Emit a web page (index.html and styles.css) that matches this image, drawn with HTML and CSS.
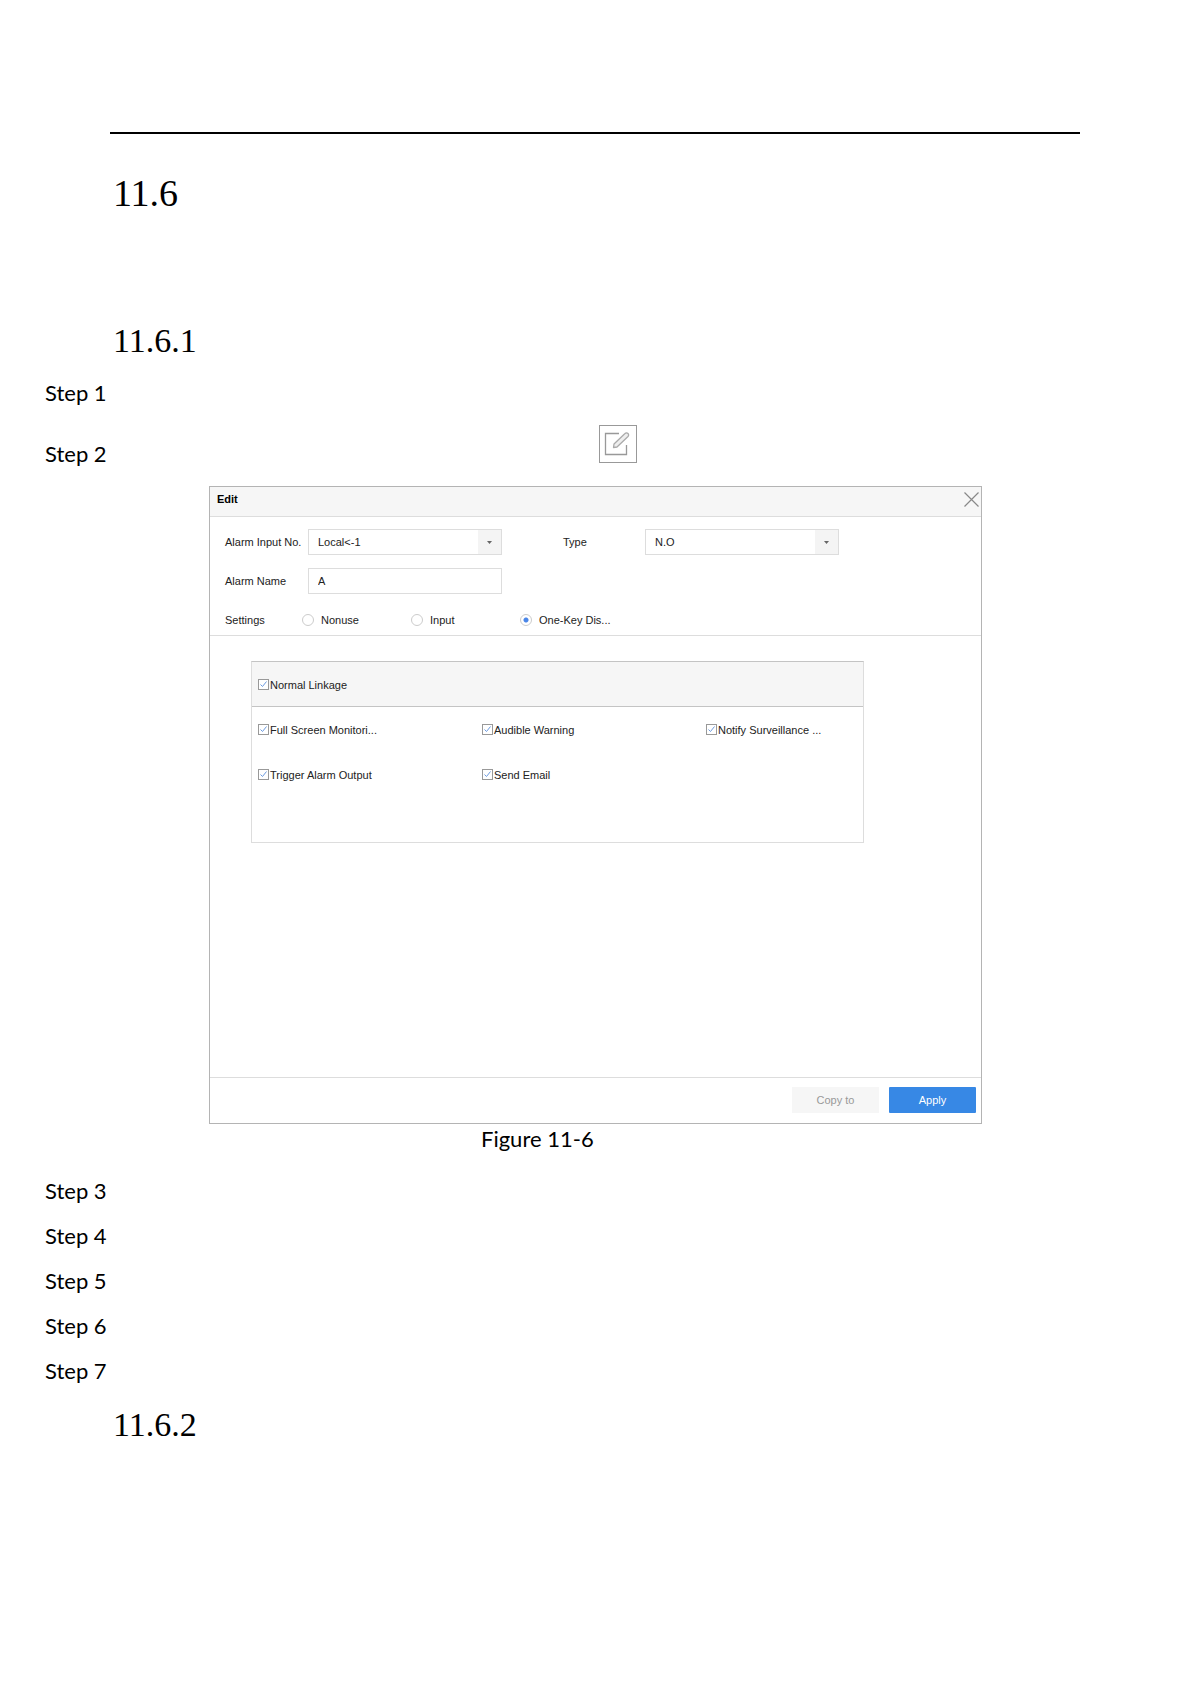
FILE: index.html
```html
<!DOCTYPE html>
<html lang="en">
<head>
  <meta charset="UTF-8" />
  <meta name="viewport" content="width=device-width, initial-scale=1.0" />
  <title>11.6</title>
  <link rel="stylesheet" href="styles.css">
</head>
<body>
  <main class="page">
    <section class="section">
      <h1>11.6</h1>
      <h2>11.6.1</h2>
    </section>

    <div class="step">Step 1</div>
    <div class="step step-edit">
      <span class="step-label">Step 2</span>
      <button class="edit-button" type="button" aria-label="Edit">
        <svg width="36" height="36" viewBox="0 0 36 36" fill="none">
          <path d="M19 7.5H5.500V28.500H26.500V19" stroke="#999" stroke-width="1.300" />
          <path d="M14 18L25 7.500A2 2 0 0 1 28 10.500L17 21L13.500 21.500Z" stroke="#aaa" stroke-width="1.300" fill="#eee" stroke-linejoin="round" />
        </svg>
      </button>
    </div>

    <figure>
      <form class="dialog">
        <div class="dialog-header">
          <span>Edit</span>
          <button class="close-button" type="button" aria-label="Close">
            <svg width="15" height="15" viewBox="0 0 15 15">
              <path d="M0.500 0.500L14.500 14.500M14.500 0.500L0.500 14.500" stroke="#888" stroke-width="1.200" />
            </svg>
          </button>
        </div>

        <div class="fields">
          <label for="alarm-input">Alarm Input No.</label>
          <select id="alarm-input">
            <option>Local&lt;-1</option>
          </select>
          <label class="type-label" for="type">Type</label>
          <select id="type">
            <option>N.O</option>
          </select>
          <label for="alarm-name">Alarm Name</label>
          <input class="text-input" type="text" id="alarm-name" value="A" />
        </div>

        <div class="settings" role="radiogroup" aria-labelledby="settings-label">
          <span id="settings-label">Settings</span>
          <label><input type="radio" name="settings" />Nonuse</label>
          <label><input type="radio" name="settings" />Input</label>
          <label><input type="radio" name="settings" checked />One-Key Dis...</label>
        </div>

        <div class="dialog-body">
          <div class="linkage">
            <div class="linkage-header">
              <label><input type="checkbox" checked />Normal Linkage</label>
            </div>
            <div class="linkage-list">
              <label><input type="checkbox" checked />Full Screen Monitori...</label>
              <label><input type="checkbox" checked />Audible Warning</label>
              <label><input type="checkbox" checked />Notify Surveillance ...</label>
              <label><input type="checkbox" checked />Trigger Alarm Output</label>
              <label><input type="checkbox" checked />Send Email</label>
            </div>
          </div>
        </div>

        <div class="dialog-footer">
          <button class="copy" type="button">Copy to</button>
          <button class="apply" type="button">Apply</button>
        </div>
      </form>
      <figcaption>Figure 11-6</figcaption>
    </figure>

    <div class="step">Step 3</div>
    <div class="step">Step 4</div>
    <div class="step">Step 5</div>
    <div class="step">Step 6</div>
    <div class="step">Step 7</div>

    <section class="last-section">
      <h2>11.6.2</h2>
    </section>
  </main>
</body>
</html>
```
FILE: styles.css
```css
* {
  box-sizing: border-box;
}
body {
  margin: 0;
  background: white;
  color: black;
  font-family: Lato, Carlito, sans-serif;
  font-size: 22px;
}
.page {
  padding: 132px 45px 200px;
}
.section {
  margin: 0 66px 0 65px;
  border-top: 2px solid black;
  padding-top: 35px;
}
.last-section {
  margin-left: 65px;
}
h1, h2 {
  margin: 0;
  padding-left: 3px;
  font-family: "Liberation Serif", serif;
  font-weight: normal;
}
h1 {
  font-size: 38px;
  line-height: 48px;
  margin-bottom: 100px;
}
h2 {
  font-size: 34px;
  line-height: 48px;
}
.step {
  line-height: 29px;
  margin-bottom: 16px;
}
.section + .step {
  margin-top: 13px;
}

/* step with the edit icon */
.step-edit {
  display: flex;
  align-items: flex-end;
  margin-top: 18px;
  margin-bottom: 23px;
}
.step-label {
  flex: 0 0 554px;
  height: 24px;
}
.edit-button {
  width: 38px;
  height: 38px;
  padding: 0;
  border: 1px solid #999;
  background: white;
}
svg {
  display: block;
}
figure {
  margin: 0 0 22px;
}
figcaption {
  max-width: 773px;
  margin: 0 auto;
  padding-left: 272px;
  line-height: 30px;
}

/* dialog */
.dialog {
  display: flex;
  flex-direction: column;
  max-width: 773px;
  min-height: 638px;
  margin: 0 auto;
  border: 1px solid #b4b4b4;
  color: #222;
  font-family: "Liberation Sans", Arial, sans-serif;
  font-size: 11px;
}
.dialog button, .dialog input, .dialog select {
  font: inherit;
  color: inherit;
}
.dialog-header {
  display: flex;
  justify-content: space-between;
  height: 30px;
  padding: 5px 2px 0 7px;
  border-bottom: 1px solid #ddd;
  background: #f6f6f6;
  color: black;
  line-height: 15px;
}
.dialog-header span {
  font-weight: bold;
}
.close-button {
  height: 15px;
  padding: 0;
  border: 0;
  background: none;
}
.fields {
  display: grid;
  grid-template-columns: 83px 194px 143px 194px;
  row-gap: 13px;
  align-items: center;
  padding: 12px 15px 0;
}
.type-label {
  margin-left: 61px;
}
select, .text-input {
  width: 100%;
  height: 26px;
  padding: 0 9px;
  border: 1px solid #ddd;
  border-radius: 0;
  background: white;
}
select {
  appearance: none;
  background: url("data:image/svg+xml,%3Csvg xmlns='http://www.w3.org/2000/svg' width='23' height='24'%3E%3Cpath fill='%23f4f4f4' d='M0 0h23v24H0z'/%3E%3Cpath fill='%23666' d='M9 11h5l-2.500 3z'/%3E%3C/svg%3E") right center no-repeat white;
}
.settings {
  display: flex;
  align-items: center;
  height: 42px;
  padding: 10px 15px 0;
  border-bottom: 1px solid #ddd;
}
.settings span {
  width: 77px;
}
.settings label {
  display: flex;
  align-items: center;
  gap: 7px;
  width: 109px;
}
input[type="radio"] {
  appearance: none;
  width: 12px;
  height: 12px;
  margin: 0;
  border: 1px solid #ccc;
  border-radius: 50%;
}
input[type="radio"]:checked {
  background: radial-gradient(circle, #4a86e8 0 2px, white 3px);
}
.dialog-body {
  flex: 1;
  padding: 25px 117px 25px 41px;
}
.linkage {
  min-height: 182px;
  border: 1px solid #ddd;
  border-top-color: #c4c4c4;
}
.linkage label {
  display: flex;
  align-items: center;
  gap: 1px;
  height: 45px;
}
.linkage-header {
  height: 45px;
  padding-left: 6px;
  border-bottom: 1px solid #c4c4c4;
  background: #f6f6f6;
}
.linkage-list {
  display: grid;
  grid-template-columns: 224px 224px 1fr;
  padding-left: 6px;
}
input[type="checkbox"] {
  appearance: none;
  width: 11px;
  height: 11px;
  margin: 0;
  border: 1px solid #999;
  background: white;
}
input[type="checkbox"]:checked {
  background: url("data:image/svg+xml,%3Csvg xmlns='http://www.w3.org/2000/svg' width='9' height='9'%3E%3Cpath fill='none' stroke='%236c9be0' d='M1.500 4.500l2 2 4-5'/%3E%3C/svg%3E") center no-repeat white;
}
.dialog-footer {
  display: flex;
  justify-content: flex-end;
  gap: 10px;
  height: 46px;
  padding: 9px 5px;
  border-top: 1px solid #ddd;
}
.dialog-footer button {
  width: 87px;
  height: 26px;
  padding: 0;
  border: 0;
}
.dialog-footer .copy {
  background: #f6f6f6;
  color: #999;
}
.dialog-footer .apply {
  border-radius: 1px;
  background: #3788e5;
  color: white;
}
```
